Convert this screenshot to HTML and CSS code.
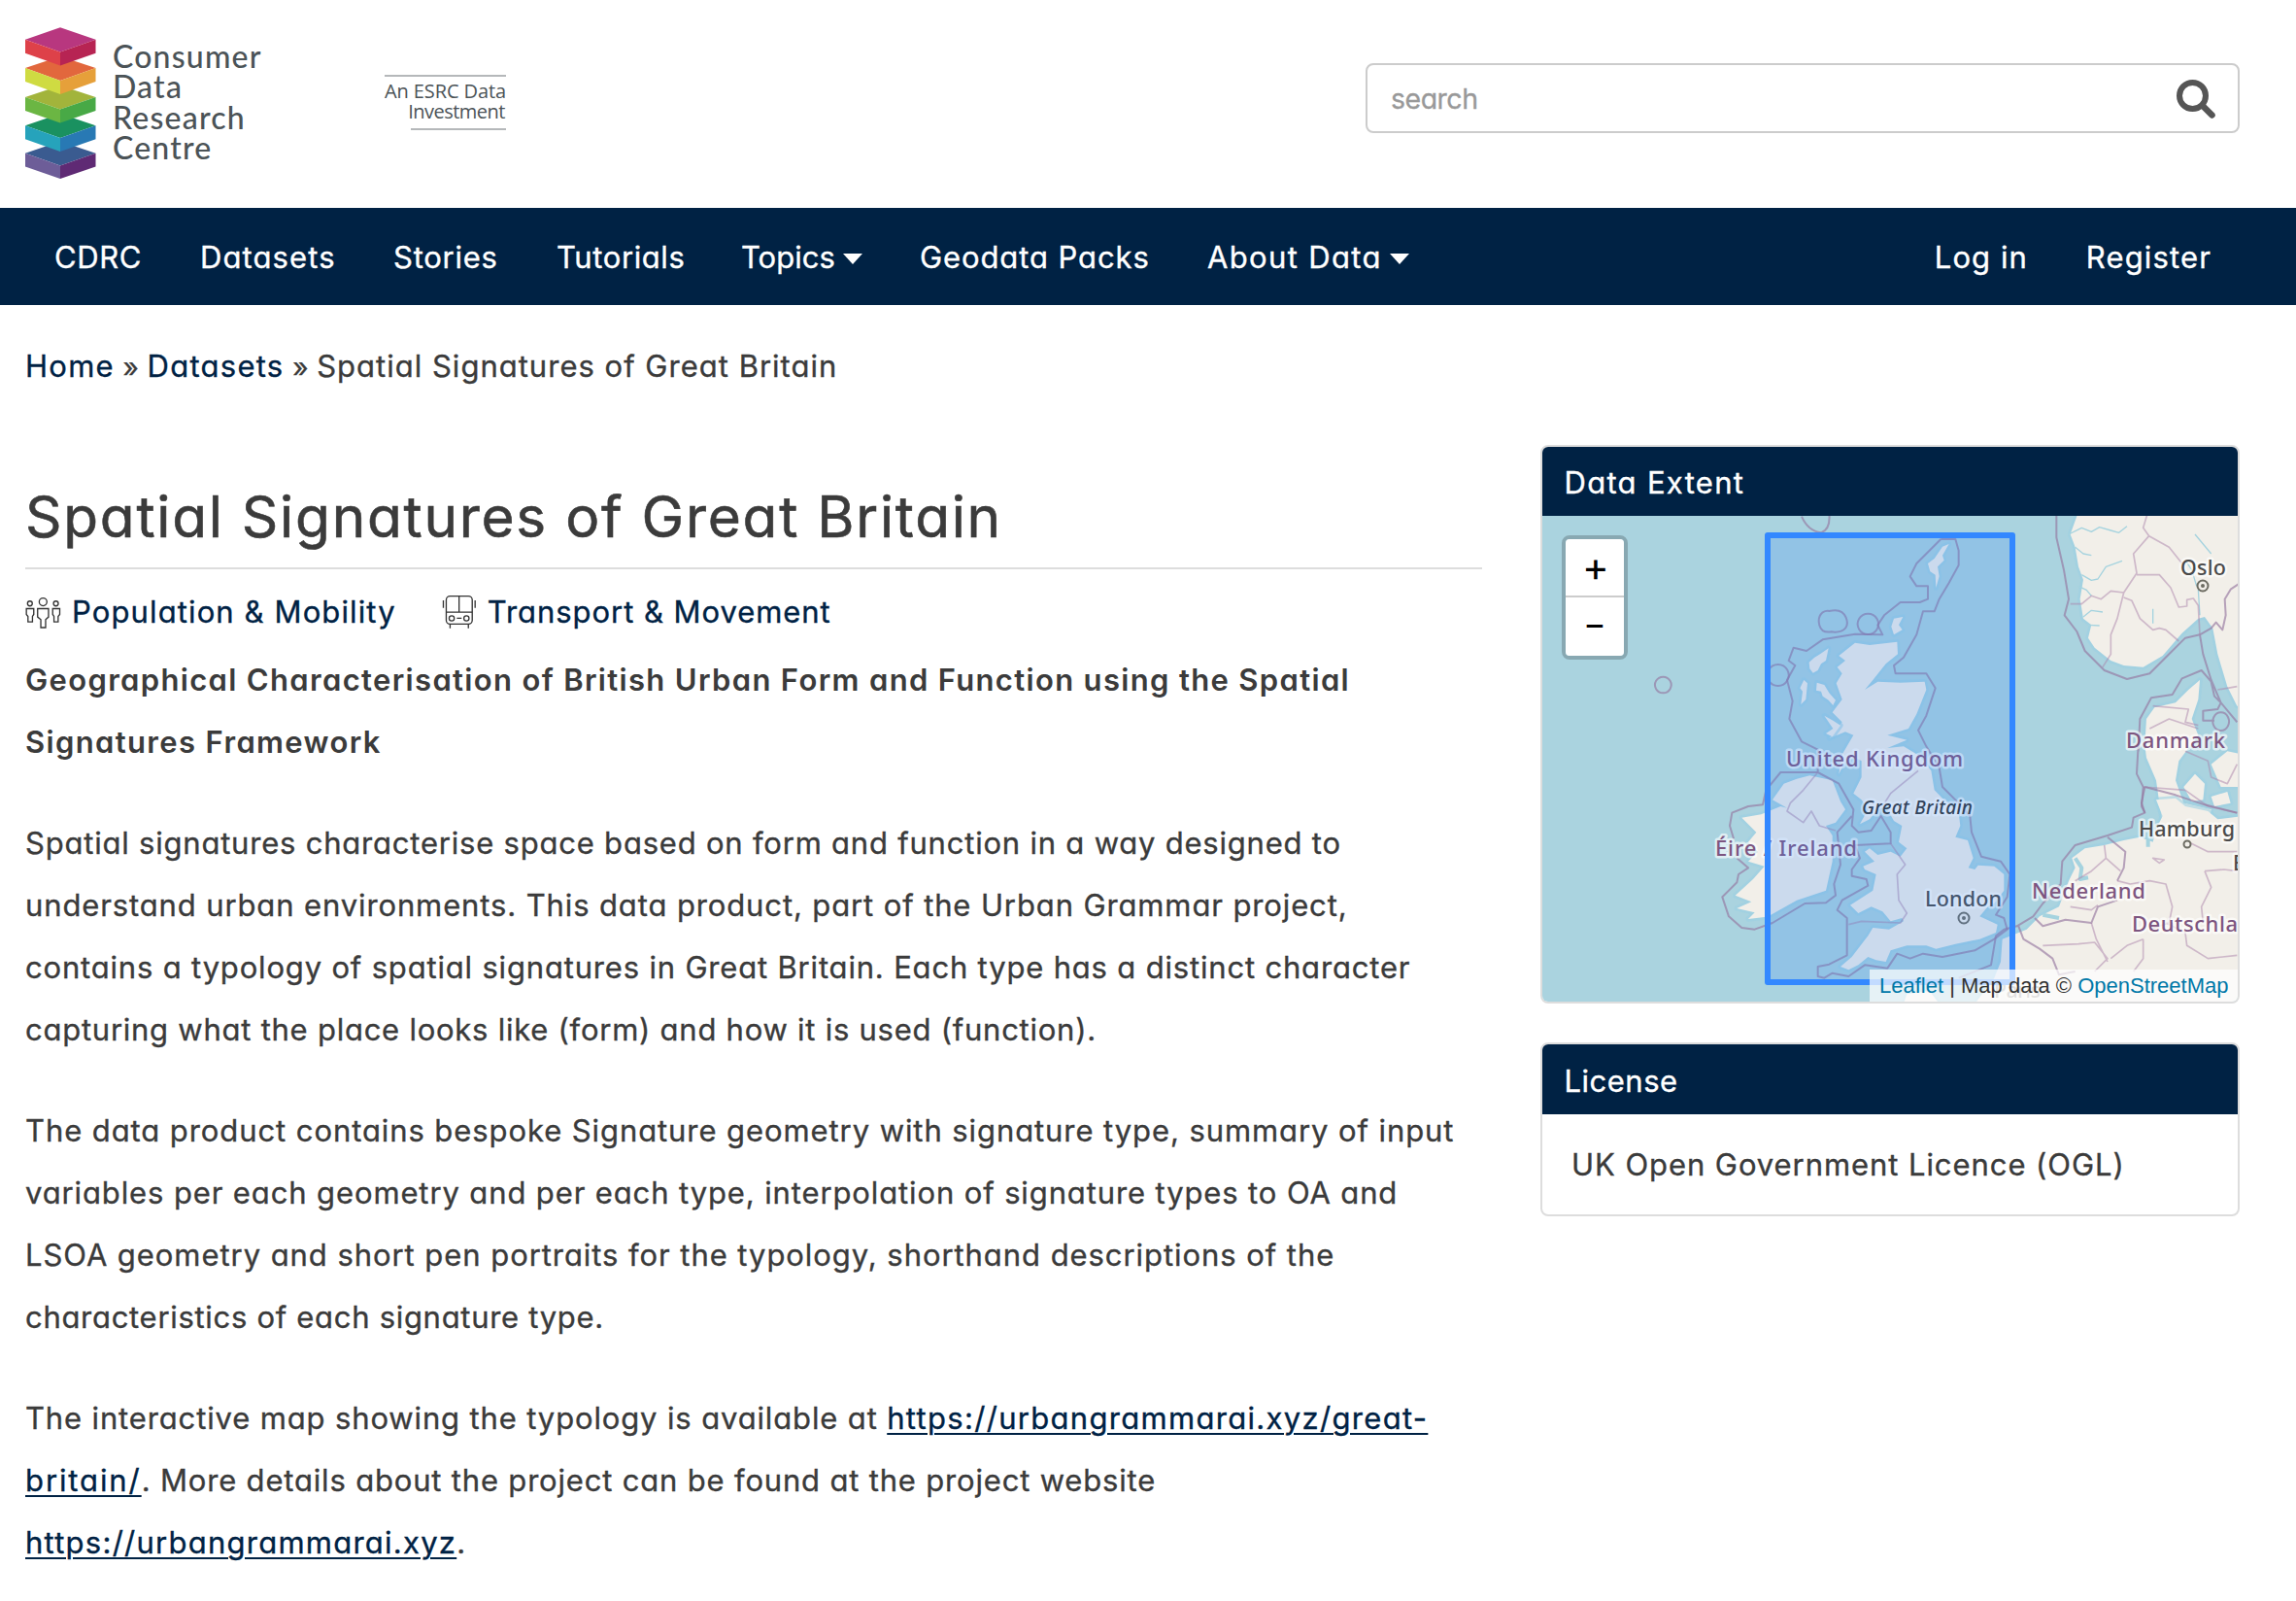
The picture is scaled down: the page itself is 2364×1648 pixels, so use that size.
FILE: index.html
```
<!DOCTYPE html>
<html lang="en">
<head>
<meta charset="utf-8">
<title>Spatial Signatures of Great Britain</title>
<link rel="stylesheet" href="styles.css">
</head>
<body>
<header class="masthead">
  <a class="logo">
    <svg class="logo-mark" width="74" height="158" viewBox="25 27 74 158">
      <g><path fill="#3a5b90" d="M62 145.500 98.500 157.700 62 170.500 26 157.700z"/><path fill="#6d5d98" d="M26 157.700 62 170.500V184L26 171.500z"/><path fill="#5f2a74" d="M98.500 157.700 62 170.500V184l36.500-12.500z"/></g>
      <g><path fill="#1a9160" d="M62 117 98.500 129.300 62 142 26 129.300z"/><path fill="#26a3bb" d="M26 129.300 62 142v14L26 143.300z"/><path fill="#2879b4" d="M98.500 129.300 62 142v14l36.500-12.700z"/></g>
      <g><path fill="#a2b43b" d="M62 88 98.500 100 62 112.500 26 100z"/><path fill="#6bb643" d="M26 100l36 12.500v14L26 114z"/><path fill="#48a946" d="M98.500 100 62 112.500v14L98.500 114z"/></g>
      <g><path fill="#e2673d" d="M62 58 98.500 70 62 83 26 70z"/><path fill="#cfdb42" d="M26 70l36 13v14L26 84z"/><path fill="#e6a03a" d="M98.500 70 62 83v14l36.500-13z"/></g>
      <g><path fill="#b8377f" d="M62 28.300 98.500 40.700 62 53.500 26 40.700z"/><path fill="#de4149" d="M26 40.700 62 53.500v14L26 54.700z"/><path fill="#b72453" d="M98.500 40.700 62 53.500v14l36.500-12.800z"/></g>
    </svg>
    <span class="logo-name">Consumer<br>Data<br>Research<br>Centre</span>
  </a>
  <div class="esrc"><span class="esrc-top">An ESRC Data</span><span class="esrc-low">Investment</span></div>
  <form class="search">
    <span class="search-hint">search</span>
    <svg width="40" height="40" viewBox="0 0 40 40"><circle cx="16.500" cy="16.500" r="13.500" fill="none" stroke="#555" stroke-width="6"/><path d="M27 27l9.500 9.500" stroke="#555" stroke-width="6.500" stroke-linecap="round"/></svg>
  </form>
</header>

<nav class="navbar">
  <a class="n-cdrc">CDRC</a><a class="n-datasets">Datasets</a><a class="n-stories">Stories</a><a class="n-tutorials">Tutorials</a><a class="n-topics">Topics<i class="caret"></i></a><a class="n-geodata">Geodata Packs</a><a class="n-about">About Data<i class="caret"></i></a>
  <div class="account"><a class="n-login">Log in</a><a class="n-register">Register</a></div>
</nav>

<div class="crumbs"><a class="c-home">Home</a> <span class="sep">»</span> <a class="c-datasets">Datasets</a> <span class="sep">»</span> <span class="c-page">Spatial Signatures of Great Britain</span></div>

<main class="page">
  <article>
    <h1>Spatial Signatures of Great Britain</h1>
    <div class="topics">
      <a class="t-pop"><svg width="38" height="37" viewBox="47 60 114 112" fill="none" stroke="#333" stroke-width="4">
        <circle cx="61" cy="91" r="7.500"/><circle cx="102" cy="86" r="12"/><circle cx="142" cy="91" r="7.500"/>
        <path d="M50 107h23v18l-4 6v17H55v-17l-5-6zM85 107h34v26l-9 8v25H95v-25l-10-8zM132 107h22v18l-5 6v17h-13v-17l-4-6z"/></svg><span>Population &amp; Mobility</span></a>
      <a class="t-bus"><svg width="36" height="37" viewBox="1335 60 108 112" fill="none" stroke="#333" stroke-width="4">
        <rect x="1348" y="68" width="81" height="87" rx="12"/><path d="M1348 118h81M1388 68v50M1339 81v24M1438 81v24M1360 155v13M1417 155v13M1381 137h15"/><circle cx="1365" cy="137" r="8"/><circle cx="1411" cy="137" r="8"/></svg><span>Transport &amp; Movement</span></a>
    </div>
    <p class="lead"><span class="a1">Geographical Characterisation of British Urban Form and Function using the Spatial</span><br><span class="a2">Signatures Framework</span></p>
    <p><span class="b1">Spatial signatures characterise space based on form and function in a way designed to</span><br><span class="b2">understand urban environments. This data product, part of the Urban Grammar project,</span><br><span class="b3">contains a typology of spatial signatures in Great Britain. Each type has a distinct character</span><br><span class="b4">capturing what the place looks like (form) and how it is used (function).</span></p>
    <p><span class="c1">The data product contains bespoke Signature geometry with signature type, summary of input</span><br><span class="c2">variables per each geometry and per each type, interpolation of signature types to OA and</span><br><span class="c3">LSOA geometry and short pen portraits for the typology, shorthand descriptions of the</span><br><span class="c4">characteristics of each signature type.</span></p>
    <p><span class="d1">The interactive map showing the typology is available at </span><a class="l1">https://urbangrammarai.xyz/great-</a><br><a class="l2">britain/</a><span class="d2">. More details about the project can be found at the project website</span><br><a class="l3">https://urbangrammarai.xyz</a>.</p>
  </article>

  <aside>
    <section class="panel">
      <h2 class="h-extent">Data Extent</h2>
      <div class="map">
        <svg class="tiles" width="716" height="500" viewBox="1588 531 716 500">
          <rect x="1588" y="531" width="716" height="500" fill="#aad3df"/>
          <!-- British Isles -->
          <g transform="translate(1800 700) scale(.33333)" stroke-linejoin="round">
            <g class="land">
              <path d="M330-115 375-108 460-118 462-80 425-50 385 0 360 30 400 5 470 8 545 5 550 30 520 105 495 150 430 170 490 185 430 210 480 205 530 235 565 280 575 340 600 365 650 410 655 450 640 485 678 495 695 550 680 580 700 585 710 572 760 575 790 600 790 650 760 690 740 700 715 730 770 755 765 780 715 800 640 815 580 830 550 820 490 820 440 835 425 870 395 865 370 855 340 880 310 895 285 885 320 855 370 790 385 765 435 770 480 745 475 735 440 745 415 715 380 700 340 720 315 695 385 650 395 600 360 585 355 575 390 560 360 530 375 520 400 540 440 530 470 545 490 520 465 500 475 450 450 435 430 400 440 385 400 400 375 430 345 445 370 400 350 370 325 350 350 300 350 250 330 240 300 250 280 290 290 230 325 170 300 160 250 180 290 130 260 100 290 60 272 10 290-20 275-40 300-60 280-75z"/>
              <path d="M75 370 110 320 150 305 190 295 260 310 285 375 300 400 270 440 240 450 260 480 260 560 240 650 150 680 70 725 50 732 0 738 20 718-35 705 10 685-40 665 15 615 50 575 0 560 30 530 0 500 25 470-20 425 40 415 100 390 120 395z"/>
              <path d="M248-98 240-60 225-50 215-30 200-22 190-35 188-55 205-70 222-80zM172 0 183 10 178 60 163 75 168 35 160 25zM212 8 235 15 250 40 270 62 262 78 248 62 230 50 225 35 210 32zM235 110 262 125 285 140 260 175 240 165 262 150zM450-190 478-195 465-170 476-155 450-140 442-165zM555-360 575-375 600-412 620-420 600-385 605-370 585-350 590-320 580-285 578-325 562-335z"/>
            </g>
            <g class="border">
              <path d="M595-435 640-435 650-400 650-355 620-300 590-250 575-212 540-212 520-140 480-70 450-45 455-20 550-20 578 25 550 110 525 155 550 205 590 270 600 330 640 370 685 420 690 470 720 545 780 560 808 600 800 670 765 725 790 735 800 770 760 800 700 835 600 855 540 845 500 860 460 845 430 890 360 880 310 915 260 905 235 920 215 915 215 885 250 878 305 850 305 735 275 710 290 680 370 635 365 615 320 605 320 585 345 550 330 510 440 505 440 470 410 420 380 465 340 470 320 450 325 400 280 320 215 285 100 285 55 340 45 385 0 390-50 410-57 450-45 490M595-435 520-360 500-320 520-290 555-290 555-250 530-240 470-240 420-200 400-170 415-140 410-140 330-142 230-125 180-90 140-100 125-60 145-45 120 0 137 65 127 120 165 190 215 215 215 285M-35 550 0 580-30 600-35 625-80 670-60 730-20 765 20 770 75 750 175 690 240 688 270 665 265 630 285 570 275 470 320 420"/>
              <path d="M250-213q40-10 52 20t-15 42q-15 5-30 2-30 5-37-20t10-40q10-6 20-4zM370-205a32 32 0 1 0 .1 0zM92-48a33 33 0 1 0 .1 0zM-263-10a25 25 0 1 0 .1 0zM165-505q20 45 60 50 30-10 25-60"/>
              <path class="thin" d="M525 280 440 350 415 390M440 505 485 570 460 600 465 680 490 720 470 750 350 745 310 755M215 285 170 340 130 380 120 405 170 440 195 405 220 450 270 465"/>
            </g>
          </g>
          <!-- Scandinavia -->
          <g transform="translate(1940 520) scale(.33333)" stroke-linejoin="round">
            <g class="land">
              <path d="M600 20 575 90 590 130 600 190 615 230 605 290 615 350 640 370 630 410 650 440 700 480 740 495 800 500 860 465 920 395 970 350 990 345 1015 380 1030 460 1060 560 1090 620 1110 620V20z"/>
              <path d="M975 540 940 570 900 610 835 625 810 660 805 740 810 780 840 850 850 920 860 980 1000 1000 1010 940 925 920 900 850 910 790 970 710 950 660 970 600z"/>
              <path d="M925 870 960 830 990 860 985 910 950 915zM1010 800 1060 760 1110 770V870L1040 870zM1010 900 1060 885 1070 920 1020 930z"/>
            </g>
            <g class="fjord"><path d="M570 90 610 70 640 82 665 68 700 78 725 85 750 65M590 130 615 150 640 155M610 215 640 232 660 228 685 190 735 172M615 345 640 325 675 330M630 370 665 372M600 250 625 262 640 280M960 90 985 120 1010 150M930 170 950 200 965 250M830 320V365M970 260 975 340"/></g>
            <g class="border">
              <path d="M532 20 532 100 555 200 570 290 557 340 595 390 620 450 680 510 750 537 820 520 880 460 930 410 975 400 1010 380 1025 362 1045 385 1055 340 1052 290 1070 260 1100 240M975 400 985 460 1010 540 1040 610 1090 670M785 760 790 660 825 595 890 585 920 535 980 510 1010 545 1020 590 1040 610 1030 630 985 635 985 665 1020 665M1040 640a25 28 0 1 0 .1 0zM785 740 780 830 800 870 795 930 805 950"/>
              <path class="thin" d="M815 20 800 70 818 95 770 150 780 210 740 270 700 265 670 290 640 280 610 305 575 305M818 95 880 130 920 180M780 215 850 215 885 255 910 315 935 312 935 292 955 288 970 310 975 400M740 270 720 350 700 400 700 460 675 500M740 285 765 295 790 350 830 385 850 380 870 385 910 420M1030 570 1090 560M800 870 930 880 1000 930 1090 950M830 620 940 630 930 670 970 680M820 690 880 660 970 690M930 760 1000 790 1010 840 1060 860 1090 800"/>
            </g>
          </g>
          <!-- Low Countries, Germany and northern France -->
          <g transform="translate(1940 760) scale(.33333)" stroke-linejoin="round">
            <g class="land">
              <path d="M840 190 900 185 930 210 1000 225 1030 250 1110 240V820H280L340 740 360 690 365 620 440 590 480 550 540 520 570 440 590 400 580 370 620 340 680 330 740 315 790 305 830 320 840 280 860 240z"/>
              <path d="M60 820 70 790 140 780 170 820z"/>
            </g>
            <g class="fjord"><path stroke-width="12" d="M590 370 610 400 605 435 630 430M490 545 540 555M815 290V335"/></g>
            <g class="border">
              <path d="M805 150 795 200 805 230 770 245 765 275 690 300 590 330 550 380 545 450 490 510 460 550 410 580 370 590 345 610 330 700 230 740M690 305 745 350 740 400 720 440M415 580 430 620 480 650 520 680 540 730 590 720M465 555 490 580 560 560 640 570 660 520 720 500M805 150 900 175 990 205 1090 230"/>
              <path class="thin" d="M680 330 685 370 640 410 590 440M685 370 730 410M575 520 640 530 660 515M490 640 600 635 650 630 690 680 650 720M640 570 655 620 690 690M720 440 760 450 820 440 870 450 890 520 880 570 820 590M800 620 750 640 700 680M800 620 800 680 770 720M870 570 930 600 935 640 1000 680 1090 670M990 410 1010 460 980 520 985 570M990 410 1050 405 1090 410M940 320 1000 350 1090 350M830 370 865 375 850 385z"/>
            </g>
          </g>
          <g class="label country"><text x="1839" y="789" textLength="182">United Kingdom</text><text x="1766" y="881" textLength="146">Éire / Ireland</text><text x="2189" y="770" textLength="102">Danmark</text><text x="2092" y="925" textLength="117">Nederland</text><text x="2195" y="959" textLength="109">Deutschla</text></g>
          <g class="label city"><text x="2245" y="592" textLength="47">Oslo</text><text x="2202" y="861" textLength="99">Hamburg</text><text x="1982" y="933" textLength="79">London</text><text x="2299" y="896">B</text><text class="isle" x="1917" y="838" textLength="114">Great Britain</text><text x="2053" y="1027" textLength="48" opacity=".5">Paris</text></g>
          <g fill="#f2efe9" stroke="#6d6c62" stroke-width="2"><circle cx="2268" cy="603" r="5.500"/><circle cx="2022" cy="945" r="5.500"/><circle cx="2252" cy="869" r="3.500"/></g>
          <g fill="#6d6c62"><circle cx="2268" cy="603" r="2"/><circle cx="2022" cy="945" r="2"/></g>
          <rect x="1820" y="551" width="252" height="460" fill="#38f" fill-opacity=".2" stroke="#38f" stroke-width="6" stroke-linejoin="round"/>
        </svg>
        <div class="zoom"><a>+</a><a>−</a></div>
        <div class="attribution"><a>Leaflet</a> | Map data © <a>OpenStreetMap</a></div>
      </div>
    </section>
    <section class="panel">
      <h2 class="h-license">License</h2>
      <div class="license">UK Open Government Licence (OGL)</div>
    </section>
  </aside>
</main>
</body>
</html>
```

FILE: styles.css
```
* { box-sizing: border-box; }
body {
  margin: 0;
  height: 1648px;
  overflow: hidden;
  background: #fff;
  color: #3b3b3b;
  font: 400 31px/64px Inter, "Open Sans", sans-serif;
  font-feature-settings: "cv11";
  white-space: nowrap;
}
a { color: #002244; text-decoration: none; }
.navbar, .crumbs, article, .panel h2, .license { -webkit-text-stroke-width: .35px; }

/* Masthead */
.masthead { display: flex; height: 214px; padding: 0 58px 0 25px; }
.logo { display: flex; padding-top: 27px; width: 371px; }
.logo-mark { flex: none; }
.logo-name { margin: 15px 0 0 17px; font: 500 32px/31.400px Lato, sans-serif; letter-spacing: 1.200px; color: #4b5357; }
.esrc { width: 125px; height: 57px; margin-top: 77px; display: flex; flex-direction: column; align-items: flex-end; border-top: 2px solid #b5b8ba; font: 400 20px/21px "Open Sans", sans-serif; color: #4b5357; }
.esrc-top { padding-top: 4px; letter-spacing: -.1px; }
.esrc-low { height: 30px; width: 98px; padding-right: 1px; border-bottom: 2px solid #b5b8ba; display: flex; justify-content: flex-end; letter-spacing: -.5px; }
.search { margin: 65px 0 0 auto; width: 900px; height: 72px; padding: 2px 23px 0 24px; display: flex; align-items: center; justify-content: space-between; border: 2px solid #ccc; border-radius: 8px; }
.search-hint { color: #999; font-size: 28.500px; letter-spacing: -.5px; -webkit-text-stroke: .3px #999; }

/* Navigation */
.navbar { display: flex; height: 100px; padding: 0 57px 0 26px; background: #002244; line-height: 101px; }
.navbar a { display: block; padding: 0 30px; color: #fff; }
.navbar .n-cdrc { width: 150px; letter-spacing: .6px; }
.navbar .n-datasets { width: 199px; letter-spacing: 1.100px; }
.navbar .n-stories { width: 168px; letter-spacing: .75px; }
.navbar .n-tutorials { width: 190px; letter-spacing: .6px; }
.navbar .n-topics { width: 184px; letter-spacing: 0; }
.navbar .n-geodata { width: 296px; letter-spacing: .9px; }
.navbar .n-about { letter-spacing: 1.350px; }
.caret { display: inline-block; margin-left: 8px; vertical-align: 4px; border: solid transparent; border-width: 11px 10px 0; border-top-color: #fff; }
.account { display: flex; margin-left: auto; }
.navbar .n-login { width: 156px; letter-spacing: 1.100px; }
.navbar .n-register { letter-spacing: 1.150px; }

/* Breadcrumbs */
.crumbs { padding: 31px 26px 0; height: 144px; }
.c-home { letter-spacing: 1.250px; }
.c-datasets { letter-spacing: 1.250px; }
.c-page { letter-spacing: 1.010px; }
.sep { font-size: 28px; }

/* Content */
.page { display: flex; gap: 60px; padding: 0 58px 0 26px; }
article { width: 1500px; padding-top: 38.500px; }
h1 { margin: 0; padding-bottom: 17.500px; border-bottom: 2px solid #ddd; font-size: 58.500px; line-height: 70px; font-weight: 400; letter-spacing: 1.740px; -webkit-text-stroke-width: .6px; }
.topics { display: flex; gap: 47px; margin: 12px 0 6px; }
.topics a { display: flex; align-items: center; }
.topics svg { position: relative; top: -1px; }
.t-pop { letter-spacing: 1.120px; }
.t-pop span { margin-left: 10px; }
.t-bus { letter-spacing: .95px; }
.t-bus span { margin-left: 11px; }
p { margin: 0 0 40px; }
.lead { font-weight: 600; -webkit-text-stroke-width: 0; }
.a1 { letter-spacing: 1.330px; }
.a2 { letter-spacing: 1.350px; }
.b1 { letter-spacing: .79px; }
.b2 { letter-spacing: .88px; }
.b3 { letter-spacing: .82px; }
.b4 { letter-spacing: .75px; }
.c1 { letter-spacing: .915px; }
.c2 { letter-spacing: .88px; }
.c3 { letter-spacing: .94px; }
.c4 { letter-spacing: .7px; }
.d1 { letter-spacing: .86px; }
.d2 { letter-spacing: .82px; }
p a { text-decoration: underline; text-decoration-thickness: 2px; text-underline-offset: 4px; }
.l1 { letter-spacing: 1.310px; }
.l2 { letter-spacing: 1.900px; }
.l3 { letter-spacing: 1.250px; }

/* Side panels */
.panel { width: 720px; margin-bottom: 40px; border: 2px solid #ddd; border-radius: 8px; overflow: hidden; }
.panel h2 { margin: 0; padding-left: 22.500px; height: 71px; background: #002244; color: #fff; font-size: 31px; font-weight: 400; line-height: 74px; }
.h-extent { letter-spacing: 1.300px; }
.panel .h-license { height: 72px; line-height: 75px; letter-spacing: .5px; }
.license { height: 103px; padding: 20px 0 0 30px; letter-spacing: .93px; }
.map { position: relative; height: 500px; }
.tiles { display: block; }
.land { fill: #f2efe9; stroke: #9dd1e2; stroke-opacity: .6; stroke-width: 16; paint-order: stroke; }
.fjord { fill: none; stroke: #a5d3df; stroke-width: 4; stroke-linejoin: round; }
.border { fill: none; stroke: #9576a0; stroke-opacity: .65; stroke-width: 6; }
.border .thin { stroke: #a981aa; stroke-opacity: .5; stroke-width: 5; }
.label { font-family: "Noto Sans", sans-serif; font-size: 22px; font-weight: 500; paint-order: stroke; stroke: #fff; stroke-opacity: .65; stroke-width: 5px; stroke-linejoin: round; }
.country { fill: #7d5580; }
.city { fill: #4a4a4a; font-size: 21.500px; }
.label .isle { font-size: 19px; font-style: italic; fill: #333; }
.zoom { position: absolute; left: 20px; top: 20px; width: 68px; height: 128px; border: 4px solid rgba(0, 0, 0, .2); border-radius: 8px; }
.zoom a { display: block; height: 60px; background: #fff; color: #000; text-align: center; font: 400 42px/56px Inter, sans-serif; border-radius: 0 0 4px 4px; }
.zoom a + a { line-height: 54px; font-size: 36px; }
.zoom a:first-child { padding-left: 2px; border-bottom: 2px solid #ccc; border-radius: 4px 4px 0 0; }
.attribution { position: absolute; right: 0; bottom: 0; height: 33px; width: 379px; padding: 0 10px; background: rgba(255, 255, 255, .7); color: #333; font: 22px/33px "Liberation Sans", sans-serif; }
.attribution a { color: #0078a8; }
```
